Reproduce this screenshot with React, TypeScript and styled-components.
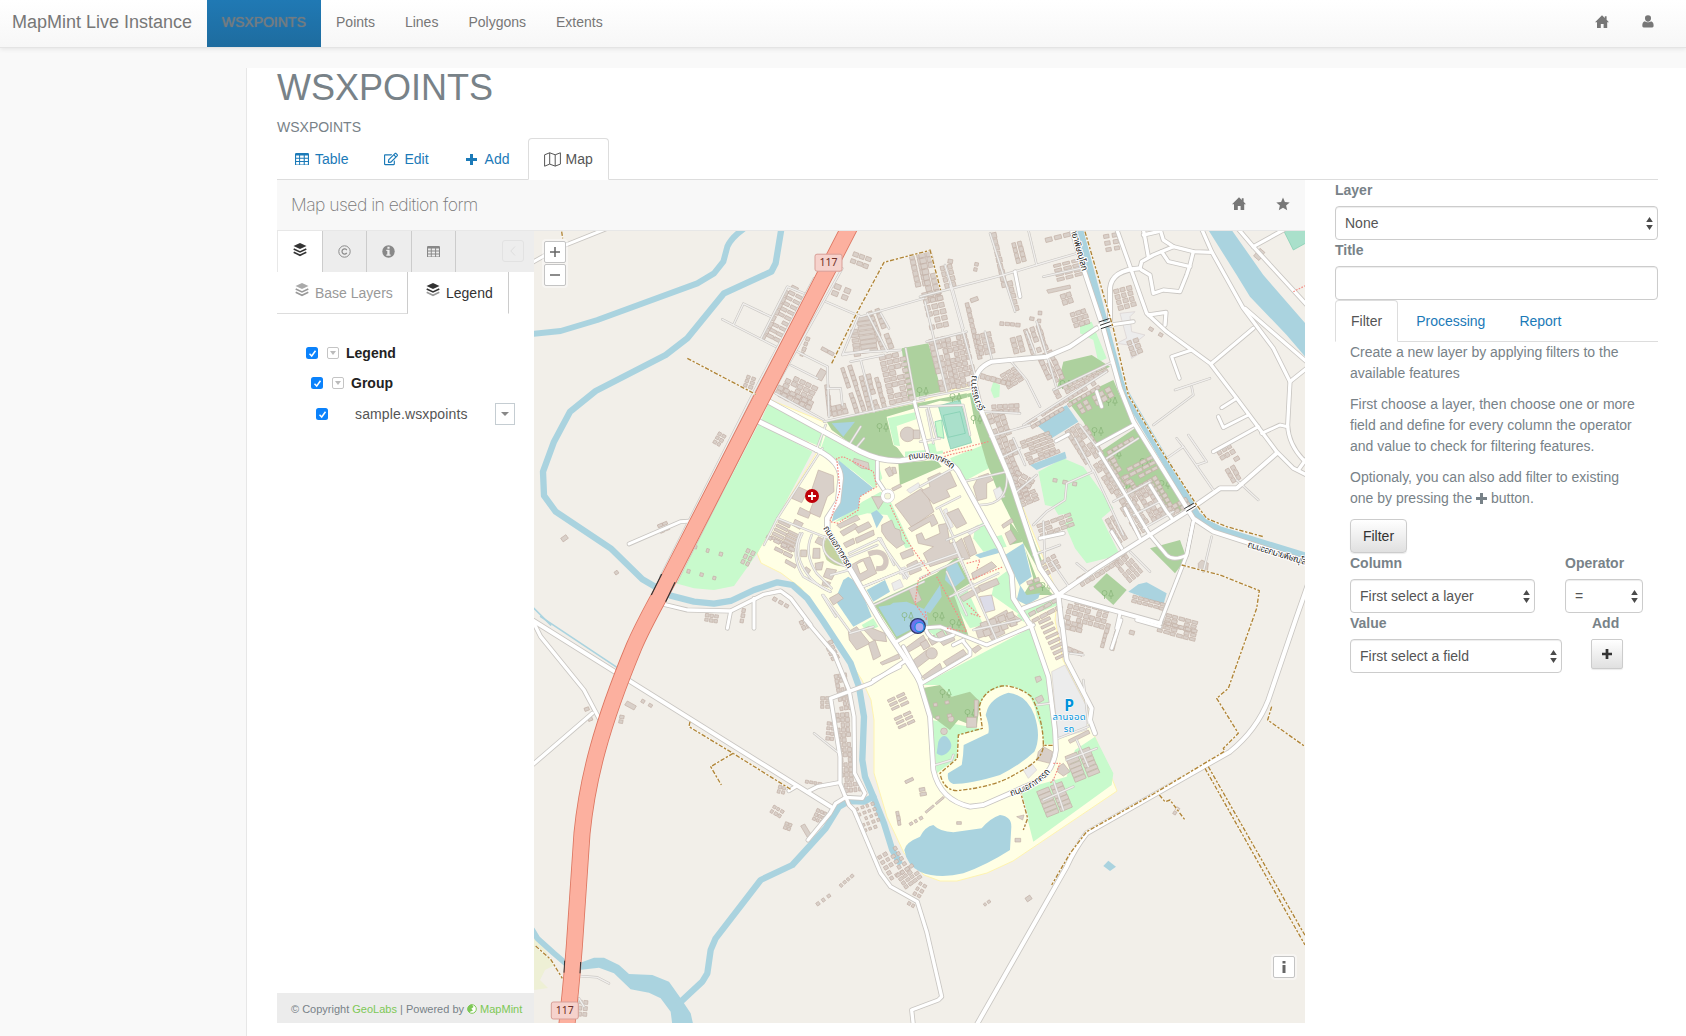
import React from 'react';
import styled, { createGlobalStyle, css } from 'styled-components';
import { FaRegEdit } from 'react-icons/fa';

const Global = createGlobalStyle`
  * { box-sizing: border-box; }
  body { margin: 0; background: #f9f9f9; font: 14px/21px "Liberation Sans", Arial, sans-serif; color: #788288; overflow: hidden; }
  svg { flex: none; }
`;

/* ---------- icons ---------- */
const HomeIcon = ({ s = 14 }: { s?: number }) => (
  <svg width={s} height={s} viewBox="0 0 14 14" fill="currentColor"><path d="M7 .3 9.800 3V1.300h1.800v3.500L14 7.300h-1.800V13H8.600V9H5.800v4H2V7.300H0z" /></svg>
);
const UserIcon = () => (
  <svg width="12" height="13" viewBox="0 0 12 13" fill="currentColor"><path d="M6 .2a3 3 0 0 1 3 3.200c0 1.900-1.300 3.300-3 3.300S3 5.300 3 3.400A3 3 0 0 1 6 .2zM3 6.200c1 1.200 4.800 1.300 6 0 2 .6 2.600 2.200 2.600 4.200 0 1.300-.4 2-1.400 2H1.700c-1 0-1.400-.7-1.400-2C.3 8.300 1 6.800 3 6.200z" /></svg>
);
const StarIcon = () => (
  <svg width="14" height="14" viewBox="0 0 14 14" fill="currentColor"><path d="M7 .5 8.900 5l4.800.4-3.600 3.200 1.100 4.700L7 10.800l-4.200 2.500 1.100-4.700L.3 5.400 5.100 5z" /></svg>
);
const TableIcon = ({ s = 14 }: { s?: number }) => (
  <svg width={s} height={s * 0.9} viewBox="0 0 14 12.600"><path fill="currentColor" fillRule="evenodd" d="M1.200 0h11.600Q14 0 14 1.200v10.200q0 1.200-1.200 1.200H1.200Q0 12.600 0 11.400V1.200Q0 0 1.200 0zM1.100 2.600v2.200h3V2.600zm4 0v2.200h3.600V2.600zm4.700 0v2.200h3.100V2.600zM1.100 5.800V8h3V5.800zm4 0V8h3.600V5.800zm4.700 0V8h3.100V5.800zM1.100 9.100v2.300h3V9.100zm4 0v2.300h3.600V9.100zm4.700 0v2.300h3.100V9.100z" /></svg>
);
const PlusIcon = ({ s = 11 }: { s?: number }) => (
  <svg width={s} height={s} viewBox="0 0 11 11" fill="currentColor"><path d="M4 0h3v4h4v3H7v4H4V7H0V4h4z" /></svg>
);
const MapIcon = () => (
  <svg width="17" height="15" viewBox="0 0 17 15" fill="none" stroke="currentColor" strokeWidth="1"><path d="M.6 2.800 5.700.8v11.300L.6 14.200zM5.700.8l5.500 2v11.300l-5.500-2M11.200 2.800l5.200-2v11.300l-5.200 2" /></svg>
);
const LayersIcon = ({ tone = 0 }: { tone?: number }) => (
  <svg width="14" height="14" viewBox="0 0 14 14">
    <path fill={tone === 1 ? '#aaa' : '#333'} d="M7 0l6.500 3L7 6 .5 3z" />
    <path fill="none" stroke={tone === 1 ? '#999' : '#333'} strokeWidth="1.500" d="M.7 6 7 9l6.300-3" />
    <path fill="none" stroke={tone === 0 ? '#333' : '#999'} strokeWidth="1.500" d="M.7 9.300l6.300 3 6.300-3" />
  </svg>
);
const InfoIcon = () => (
  <svg width="13" height="13" viewBox="0 0 13 13"><circle cx="6.500" cy="6.500" r="6.200" fill="#888" /><path fill="#eee" d="M5.400 1.800h2.200v1.900H5.400zM4.300 4.800h3.300v4.600h1v1.300H4.300V9.400h1V6.100h-1z" /></svg>
);
const CopyrightIcon = () => (
  <svg width="13" height="13" viewBox="0 0 13 13" fill="none" stroke="#8a8a8a"><circle cx="6.500" cy="6.500" r="5.700" /><path d="M8.800 5.100a2.600 2.600 0 1 0 0 2.800" strokeWidth="1.200" /></svg>
);
const MintIcon = () => (
  <svg width="10" height="10" viewBox="0 0 10 10"><circle cx="5" cy="5" r="4.300" fill="#fff" stroke="#7dc855" /><path fill="#7dc855" d="M5 .5a4.500 4.500 0 0 0-3 7.800L6 6.500 4.300 4.700 6.500 3z" /></svg>
);
const Updown = () => (
  <svg width="7" height="13" viewBox="0 0 7 13" fill="#4b4b4b"><path d="M3.500 0 6.800 5H.2zM3.500 13 6.800 8H.2z" /></svg>
);

/* ---------- top bar ---------- */
const Nav = styled.nav`
  display: flex; height: 48px; background: linear-gradient(#fff, #f7f7f7); border-bottom: 1px solid #e4e4e4;
  box-shadow: 0 1px 5px rgba(0,0,0,.09); color: #777;
`;
const Brand = styled.div`width: 207px; padding: 12px 0 0 12px; font-size: 18px; line-height: 20px; white-space: nowrap;`;
const NavItem = styled.a<{ $active?: boolean }>`
  padding: 12px 15px; line-height: 20px; text-shadow: 0 1px 0 rgba(255,255,255,.25);
  ${p => p.$active && css`background: linear-gradient(#2079b4, #1e6c9f); color: #737b81; text-shadow: 0 0 1px #808080;`}
`;
const NavRight = styled.div`margin-left: auto; display: flex; gap: 33px; padding: 15px 32px 0 0;`;

const Page = styled.main`margin: 20px 0 0 246px; border-left: 1px solid #e7e7e7; background: #fff; height: 968px; padding: 0 28px 0 30px;`;
const Title = styled.h1`margin: 0; font-size: 36px; line-height: 39px; font-weight: 400; color: #788288;`;
const Subtitle = styled.div`margin-top: 10px; height: 21px; line-height: 21px;`;

const Tabs = styled.div`display: flex; height: 42px; border-bottom: 1px solid #ddd;`;
const Tab = styled.a<{ $active?: boolean }>`
  display: flex; align-items: center; gap: 4px; height: 42px; padding: 0 15px; margin-right: 2px;
  color: #1b7ab8; border: 1px solid transparent; border-radius: 4px 4px 0 0;
  ${p => p.$active && css`color: #555; background: #fff; border-color: #ddd #ddd transparent;`}
`;
const TabIcon = styled.span`width: 18px; display: flex; justify-content: center;`;
const Columns = styled.div`display: flex; align-items: flex-start;`;
const MapPanel = styled.section`width: 1028px;`;
const PanelHead = styled.header`
  height: 51px; display: flex; align-items: center; padding: 0 15px 0 14px; background: #f8f8f8; border-bottom: 1px solid #e7e7e7; color: #777;
`;
const PanelTitle = styled.span`font: 200 17.500px "Inter", "Roboto", sans-serif; letter-spacing: -.52px; color: #777; margin: 0 auto 2px 0;`;
const HeadIcons = styled.span`display: flex; gap: 30px; padding-bottom: 2px;`;
const PanelBody = styled.div`display: flex; height: 792px;`;

/* ---------- layer sidebar ---------- */
const Side = styled.aside`width: 257px; display: flex; flex-direction: column;`;
const ToolRow = styled.div`display: flex; height: 41px; background: #ededed; padding-right: 10px; align-items: stretch;`;
const Tool = styled.div<{ $active?: boolean }>`
  width: 44.300px; display: flex; align-items: center; justify-content: center; color: #888; border-right: 1px solid #ccc;
  ${p => p.$active && css`width: 46px; background: #fff; padding-bottom: 4px; border-left: 1px solid #e8e8e8;`}
`;
const Collapse = styled.div`margin: 9px 0 0 auto; width: 22px; height: 22px; border: 1px solid #e2e2e2; border-radius: 3px; display: grid; place-items: center;`;
const SubTabs = styled.div`display: flex; height: 42px;`;
const SubTab = styled.div<{ $w: number; $active?: boolean }>`
  width: ${p => p.$w}px; display: flex; gap: 6px; padding: 11px 0 0 18px; line-height: 21px; border-right: 1px solid #ccc;
  color: ${p => (p.$active ? '#333' : '#999')}; border-bottom: 1px solid ${p => (p.$active ? 'transparent' : '#ddd')};
`;
const Tree = styled.div`flex: 1; padding-top: 24px;`;
const TreeRow = styled.div<{ $x: number; $h: number; $leaf?: boolean }>`
  display: flex; align-items: center; height: ${p => p.$h}px; padding-left: ${p => p.$x}px; color: ${p => (p.$leaf ? '#555' : '#222')};
  font-weight: ${p => (p.$leaf ? 400 : 700)};
`;
const Check = styled.span`width: 12px; height: 12px; border-radius: 2.500px; background: #0b82fb; display: grid; place-items: center;`;
const Fold = styled.span`width: 12px; height: 12px; border: 1px solid #c4c4c4; border-radius: 2px; margin: 0 7px 0 9px; display: grid; place-items: center;`;
const LeafName = styled.span`margin-left: 27px; width: 140px; letter-spacing: .13px;`;
const Drop = styled.span`width: 20px; height: 22px; border: 1px solid #c5cdd2; display: grid; place-items: center;`;
const Foot = styled.footer`height: 30px; padding: 2px 0 0 14px; background: #ececec; font-size: 11px; display: flex; align-items: center; white-space: pre;`;
const Green = styled.a`color: #7dc855;`;
const MintLink = styled(Green)`display: flex; align-items: center; gap: 3px;`;

/* ---------- form column ---------- */
const Form = styled.section`margin-left: 30px; width: 323px;`;
const Label = styled.label`display: block; height: 26px; line-height: 21px; font-weight: 700;`;
const SelectBox = styled.div<{ $w: number }>`
  width: ${p => p.$w}px; height: 34px; display: flex; align-items: center; justify-content: space-between; padding: 0 4px 0 9px;
  border: 1px solid #ccc; border-radius: 4px; background: #fff; box-shadow: inset 0 1px 1px rgba(0,0,0,.075); color: #555;
`;
const Input = styled.input`width: 323px; height: 34px; border: 1px solid #ccc; border-radius: 4px; display: block; box-shadow: inset 0 1px 1px rgba(0,0,0,.075);`;
const Pane = styled.div`padding: 0 15px;`;
const Button = styled.button<{ $w: number; $h: number }>`
  display: grid; place-items: center; width: ${p => p.$w}px; height: ${p => p.$h}px; padding: 0; font: inherit; color: #333; border: 1px solid #ccc; border-radius: ${p => (p.$h > 32 ? 4 : 2)}px;
  background: linear-gradient(#fff, #e0e0e0); box-shadow: 0 1px 1px rgba(0,0,0,.08);
`;
const FieldRow = styled.div<{ $gap: number }>`display: flex; gap: ${p => p.$gap}px;`;
const AddField = styled.div`& > label { margin-left: 1px; }`;
const Help = styled.p`margin: 0 0 10px; white-space: nowrap; line-height: 21px; & svg { display: inline-block; vertical-align: -1px; }`;

/* ---------- map ---------- */
const MapView = styled.div`position: relative; width: 771px; height: 792px; overflow: hidden; background: #f2efe9;`;
const Ctl = styled.div<{ $c: 'zoom' | 'info' }>`
  position: absolute; padding: 2px; border-radius: 4px; background: rgba(255,255,255,.4); display: grid; gap: 1px;
  ${p => (p.$c === 'zoom' ? css`left: 8px; top: 8px;` : css`right: 8px; bottom: 43px;`)}
`;
const CtlBtn = styled.div`width: 22px; height: 22px; border: 1px solid #c4c4c4; border-radius: 2px; background: #fff; color: #666; font-weight: 700; display: grid; place-items: center;`;

/* Survey sheets: every sheet has its own origin and three units per pixel. */
type Sheet = 'A' | 'B' | 'C' | 'D' | 'E';
const origin: Record<Sheet, [number, number]> = { A: [534, 225], B: [920, 225], C: [534, 620], D: [920, 620], E: [740, 380] };
const T = (s: Sheet) => `translate(${origin[s][0]},${origin[s][1]}) scale(.33333)`;
type Shape = [Sheet, string];

const campus = 'M771,400 824,422 920,402 973,382 1010,475 1058,595 1055,620 1063,660 1087,707 1095,737 1117,791 1013,861 987,873 957,881 940,881 924,875 904,853 887,817 874,773 874,720 871,700 862,680 851,663 824,622 801,588 781,573 761,563 757,553 777,518 817,452Z';

const grass: Shape[] = [
  ['A', '675,595 835,680 740,860 670,985 600,1083 540,1095 480,1090 425,1075'],
  ['A', '705,530 870,625 860,665 680,590'], ['A', '875,630 960,680 1030,705 1045,760 1020,790 960,740 860,672'],
  ['A', '985,830 1040,800 1070,830 1133,965 1115,970 1060,870 1000,865 900,892 960,850'],
  ['E', '495,205 600,185 610,220 495,240'], ['E', '585,125 605,120 612,175 592,170'],
  ['B', '90,700 190,660 215,725 130,770'],
  ['B', '355,740 430,700 490,725 580,850 545,880 600,990 500,1015 465,970 435,900 450,865 415,870 400,845 375,840'],
  ['B', '480,300 515,290 560,400 535,412 520,345 480,325'], ['B', '220,470 240,480 238,515 222,520 212,495'],
  ['B', '165,905 195,890 240,970 190,980 160,940'], ['B', '225,935 245,930 260,965 240,970'],
  ['B', '225,1065 265,1035 280,1130 300,1170 215,1110'], ['B', '290,1170 410,1110 415,1140 350,1165 310,1190'],
  ['B', '90,1110 140,1090 190,1200 150,1210'],
  ['D', '5,195 330,25 385,170 405,370 375,375 350,290 320,220 265,195 215,215 180,260 150,225 95,230 60,195'],
  ['D', '15,25 30,0 100,40 60,60'],
  ['D', '35,300 90,310 190,328 115,345 110,415 50,460'], ['D', '465,390 525,350 580,460 575,495 340,665 300,510 440,470'],
  ['E', '365,735 400,715 415,740 380,755'],
];
const wood: Shape[] = [
  ['B', '-55,370 25,355 65,500 -35,522'], ['E', '260,125 680,40 685,70 600,62 525,85 440,110 470,200 495,235 400,235 330,190 275,150'],
  ['E', '475,250 590,240 605,260 480,315'], ['E', '680,42 705,35 905,540 890,560 850,490 780,350 740,250'],
  ['E', '400,670 590,580 650,530 690,610 640,640 685,765 560,740 470,778'],
  ['B', '430,410 515,390 570,425 410,495'], ['B', '445,530 580,465 595,500 640,600 530,665 490,590'],
  ['B', '540,680 645,610 800,840 780,860 740,850 680,780 630,810 580,730'], ['B', '690,970 780,945 800,1000 765,1045'],
  ['B', '520,1085 560,1045 620,1095 580,1140'], ['B', '270,890 300,930 350,1060 400,1110 310,1110 340,1060 310,950 270,960'],
  ['D', '5,205 60,195 95,230 150,215 180,245 170,322 115,300 90,330 50,300 35,290'],
];
const ponds: Shape[] = [
  ['B', '345,595 440,540 475,590 395,640'], ['B', '330,720 435,680 440,700 350,735'], ['B', '625,1100 655,1078 680,1072 740,1105 730,1140'],
  ['B', '255,990 310,955 335,1055 300,1080 320,1110 360,1105 355,1120 320,1140 290,1125 300,1085'],
  ['E', '295,240 400,325 360,350 355,385 275,425 305,310'], ['E', '393,400 410,390 430,410 410,445'], ['E', '275,130 345,125 310,170'],
  ['E', '285,660 310,600 325,590 355,610 395,710 340,740'], ['E', '380,630 435,600 450,635 400,665'],
  ['E', '415,680 450,675 460,668 500,665 560,690 565,735 510,750 470,770'], ['E', '620,560 650,545 675,595 640,625 615,600'],
  ['E', '705,525 765,505 790,515 720,535'], ['E', '600,615 605,650 570,700 550,690'],
  ['D', '550,738 565,722 588,740 570,753'], ['B', '865,15 935,15 1030,150 1160,300 1160,400 1100,330 990,215 950,150'],
  ['C', '135,1030 180,1013 210,1013 255,1035 285,1062 355,1065 405,1085 440,1135 470,1180 478,1215 415,1215 410,1175 380,1135 345,1118 290,1108 240,1060 195,1043 135,1050'],
];
const lakes = [
  'M200,275 Q210,235 265,218 Q320,225 343,285 Q365,350 343,395 Q300,435 240,465 Q150,492 100,492 Q80,485 84,460 L125,435 Q130,410 131,375 L205,340 Q210,320 197,285Z',
  'M0,650 Q15,620 40,615 Q60,635 100,637 L185,625 Q210,595 240,585 Q275,590 274,620 L270,690 Q200,735 130,760 Q55,778 0,755 Q-40,735 -47,690 Q-45,668 0,650Z',
  'M55,365 Q65,343 80,350 Q105,375 85,395 Q65,415 50,400Z',
];
const streams: [Sheet, string, number][] = [
  ['A', 'M628,12 Q590,40 580,65 L568,110 L540,145 L490,175 L190,285 L80,318 L-10,327', 18],
  ['A', 'M742,12 L725,115 L712,140 L570,205 L460,340 L395,390 L185,498 L108,560 L60,650 L27,740 L30,812 L65,860 L230,970 L325,1063 L410,1112 L480,1130 L540,1136 L590,1128 L660,1095 L730,1072 L775,1080 L820,1120 L865,1185 L950,1315 L975,1385 L990,1475 L985,1605 L993,1655 L1018,1715 L1050,1795 L1075,1875 L1095,1910', 19],
  ['C', 'M1018,530 L990,545 L945,543 L915,560 L875,625 L775,735 L680,780 L545,955 L530,990 L520,1060 L505,1085 L435,1150', 19],
  ['C', 'M-5,930 L10,955 L60,1000 L95,1030', 17], ['C', 'M20,-10 L250,143', 5], ['A', 'M-5,1145 L50,1200', 5],
  ['B', 'M478,12 L600,470 L625,520 L790,800 L830,870 L860,895 L900,915 L1160,995', 22],
];
const R = (w: number, s: Sheet, list: string[]): [Sheet, string, number][] => list.map(d => [s, d, w]);
const roads: [Sheet, string, number][] = [
  ...R(4, 'A', [
    'M565,283 L680,342 L725,365', 'M598,300 L628,236 L710,275', 'M680,342 L760,185 L810,205', 'M725,505 L870,585', 'M770,420 L850,460',
    'M875,230 L980,275 L1170,220', 'M930,385 L1100,375', 'M975,270 L925,390 L1005,375', 'M1000,265 L1060,380', 'M1040,265 L1065,310',
    'M880,425 L885,575', 'M950,410 L1050,390', 'M980,405 L1020,560', 'M1115,370 L1145,530', 'M790,380 L880,425', 'M870,590 L1170,525', 'M880,490 L920,490 L925,540',
    'M865,670 L730,880 L690,960', 'M875,600 L845,680', 'M730,880 L870,935 L890,940', 'M805,925 Q770,990 830,1060 Q860,1090 890,1100', 'M945,1035 L890,1050',
    'M865,1110 L905,1175', 'M945,985 L1040,940 L1080,1020', 'M990,1085 L1170,1010', 'M1020,1140 L1170,1070', 'M935,1000 L1030,960', 'M945,660 L980,605', 'M965,670 L990,640',
  ]),
  ...R(4, 'B', [
    'M0,215 L250,150 L350,120 L470,85', 'M210,25 L285,260', 'M325,15 L350,120', 'M370,155 L480,130', 'M15,230 L80,500', 'M90,180 L165,450', 'M75,120 L100,200 L130,310', 'M20,350 L140,320',
    'M0,520 L160,490', 'M190,560 L300,565', 'M265,400 L320,465 L360,545', 'M350,290 L410,490', 'M320,320 L345,385', 'M195,320 L215,400', 'M400,495 L580,410', 'M310,600 L560,440',
    'M280,640 L315,720', 'M210,635 L330,600', 'M240,700 L300,670', 'M560,700 L655,640', 'M465,640 L520,740 L440,775 L435,825 L380,860 L340,900', 'M480,600 L540,680', 'M290,800 L350,750', 'M520,735 L610,930',
    'M580,830 L690,770', 'M640,870 L720,830', 'M670,910 L760,860', 'M700,600 L820,510 L815,485', 'M765,495 L870,460', 'M740,700 L790,665 L770,640', 'M805,630 L860,710 L830,720', 'M790,665 L880,795', 'M950,765 L1015,825',
    'M875,935 L850,1040', 'M370,890 L375,1010', 'M340,990 L420,960', 'M470,1015 L500,1040', 'M630,980 L690,1040', 'M395,1010 L450,1090', 'M130,770 L260,740 Q270,840 180,840', 'M90,1115 L235,1045', 'M80,1040 L140,1170', 'M0,1060 L130,1000', 'M0,545 L130,540 L150,630', 'M0,650 L60,640 M25,548 L50,640',
  ]),
  ...R(4, 'D', ['M160,30 L300,0', 'M415,355 L505,320', 'M470,360 L505,440', 'M400,480 L430,570', 'M370,540 L460,500', 'M440,420 L530,385', 'M450,100 L490,105', 'M350,255 L390,250', 'M45,435 L95,420 L100,405', 'M490,180 L505,310']),
  ...R(4, 'C', ['M135,1068 L190,1072 L225,1090', 'M840,340 L915,400', 'M135,1135 L150,1160']),
  ...R(4, 'E', ['M600,385 L640,470', 'M590,385 L660,350', 'M620,480 L740,430', 'M415,475 L500,595', 'M480,580 L650,520', 'M370,620 L470,580', 'M640,490 L770,780', 'M560,90 L580,190', 'M400,740 L330,760', 'M250,645 L330,755', 'M640,480 L700,630', 'M540,320 L640,265', 'M180,460 Q150,530 190,590 L270,635', 'M215,465 Q190,520 230,580 L275,625', 'M255,470 Q230,530 320,560']),
  ...R(9, 'A', ['M-10,115 L70,70 L215,12', 'M285,957 L440,890 L470,888', 'M590,1158 L580,1210', 'M660,1120 L660,1210']),
  ...R(10, 'A', ['M390,1138 L460,1155 L590,1158 L690,1108 L740,1098 L770,1120 L830,1200']),
  ...R(4, 'A', ['M840,160 L660,500 L380,1055', 'M925,130 L700,530 L428,1070']),
  ...R(10, 'C', ['M815,0 L900,100 L945,210 L960,290 L962,460 L993,520 L985,535 L935,532 L918,490 L918,410 L890,235 L1010,190 L1110,125', 'M0,10 L20,50 L150,210 L195,295', 'M-5,435 L175,280', 'M820,515 L850,500 L915,488', 'M935,532 L905,550 L888,580 L822,660', 'M935,530 L945,555 L960,570 L1040,760 L1070,800 L1150,845 L1178,935 L1223,1130 L1213,1140 L1133,1170 L1138,1215', 'M765,512 L785,500']),
  ...R(12, 'C', ['M-5,0 L290,185 L890,560']),
  ...R(12, 'D', ['M168,1218 L440,740 Q465,685 500,640 L930,395 Q1010,330 1045,240 L1130,-10 L1165,-110']),
  ...R(12, 'D', ['M-25,135 L0,190 L30,290 L40,450 Q60,540 150,560 L190,555 L350,485 Q400,455 408,390 L405,330 L385,170 L330,10', 'M425,0 L440,120 L515,265 L510,300 L525,340']),
  ...R(9, 'D', ['M603,0 L575,85', 'M650,0 L720,20', 'M5,190 L150,105 L150,90 L130,65', 'M15,20 Q25,60 60,60 L100,45', 'M100,75 L130,60']),
  ...R(13, 'B', ['M330,1200 L280,1120 L275,1050 L240,970 L120,750 Q100,700 0,690', 'M415,1110 L425,1200', 'M415,1110 L360,1030 L270,760 L185,560']),
  ...R(14, 'A', ['M1170,697 L1100,707 Q1040,710 980,680 L705,530', 'M675,590 L850,675 Q920,710 920,760 L912,830 L880,880 L880,915 L1040,1190 L1160,1370']),
  ...R(9, 'E', ['M432,330 L412,300 L412,245', 'M523,65 L565,225', 'M470,785 L540,745 L600,740 L690,775 L740,795 L880,735', 'M400,900 L480,860', 'M490,800 L540,890']),
  ...R(12, 'B', ['M530,310 L450,365 L380,395 L215,410 Q165,430 165,480 L185,560', 'M415,1110 L530,1030 L800,860 L900,790 L950,790 L1070,685', 'M415,1110 L720,1195', 'M415,1110 L310,1150', 'M455,12 L490,130 L550,310 L600,490 L640,590 L820,880 L880,920 L1160,1010', 'M570,300 L570,190 Q575,135 660,130 ']),
  ...R(10, 'B', ['M660,130 L665,110 L700,90 L760,65 L820,80 L875,82', 'M590,12 L680,265 L740,320 L870,415 L950,520 L1070,680 L1120,730 L1160,750', 'M845,12 L875,80 L970,250 L1060,370 L1110,470 L1103,600 Q1105,660 1155,710', 'M1135,735 L1160,700', 'M955,12 L1000,65 L1165,245', 'M1000,65 L1090,15', 'M975,250 L1160,410', 'M1110,470 L1160,430', 'M1000,310 L875,415', 'M665,135 L690,150 L700,205 L730,195 L780,200 L800,150 L810,120 L820,80', 'M725,80 L745,110 L810,125', 'M720,12 L730,45 L760,65', 'M670,12 L685,95', 'M670,30 L715,20', 'M685,270 L738,262 L735,300']),
  ...R(9, 'B', ['M570,300 L640,290', 'M815,375 L755,395 L778,460', 'M1015,605 L880,680', 'M985,570 L910,608 L895,575', 'M950,520 L905,548', 'M1025,625 L1080,600 L1103,605', 'M820,890 L800,990 Q760,1010 740,990 L690,930 L540,685', 'M820,890 L800,990 L720,1195', 'M640,600 L530,660', 'M660,940 L615,850', 'M690,780 L740,860 L760,885', 'M605,970 L575,920', 'M285,140 L300,215', 'M360,940 L430,925', 'M600,1165 L590,1210', 'M530,500 L545,545', 'M408,648 L445,628']),
];
const trunk = 'M950,-1185 L690,-680 L405,-125 C360,-40 330,10 300,80 C200,320 160,480 144,640 L125,920 Q117,1050 98,1220';
const tracks: Shape[] = [
  ['A', '83,20 86,40'], ['A', '460,400 665,508'], ['A', '893,415 960,280 1050,112 1180,78 1190,75'], ['B', '30,75 62,195'], ['B', '495,20 580,310 625,510 720,670 830,840 860,880 920,905 1030,935'],
  ['B', '785,1020 900,1050 1018,1097 1010,1150 925,1390 890,1420 955,1525 910,1570 915,1580'],
  ['C', '468,305 465,320 597,400 770,508'], ['C', '597,400 530,440 562,495'], ['C', '5,978 50,1018 85,1075'],
  ['D', '912,395 700,522 500,635 450,700 395,795'], ['D', '855,445 1155,975'], ['D', '865,440 1160,955'], ['D', '1055,260 1043,300 1160,383'],
  ['D', '718,525 735,545 750,540 795,600'], ['D', '300,510 323,595 310,630'],
];
const lakePath = 'M398,376 L370,376 Q370,300 335,230 Q290,195 245,198 Q190,210 178,260 L187,325 L115,345 L112,415 L60,460 Q70,510 110,512 Q230,500 290,460 Q370,420 370,376';
const footways: Shape[] = [
  ['E', '295,430 270,425 300,330 290,235 310,230 400,275 410,320 360,350 355,390 300,425'], ['E', '450,375 500,480 570,580 535,600 525,670 560,720 555,690'],
  ['E', '610,220 625,215 745,185'], ['E', '613,230 630,224 700,208'], ['E', '590,590 680,755 620,745'], ['E', '690,600 790,560'], ['E', '680,670 720,710 690,700'], ['E', '680,550 720,540 710,570'], ['D', '400,430 420,430 400,480 390,490'], ['B', '1120,200 1160,180'],
];
const solids: Shape[] = [
  ['E', '235,270 280,287 282,335 262,350 240,412 208,398 222,360 208,350'], ['E', '175,320 203,333 185,368 155,355'], ['E', '180,382 212,398 205,415 172,402'], ['E', '165,418 190,430 180,448 158,436'],
  ['E', '465,375 545,325 560,340 582,395 515,442'], ['E', '563,295 600,278 607,285 630,275 650,318 620,330 630,350 580,372 545,332 570,320'],
  ['E', '715,290 745,280 750,290 760,300 740,310 740,355 712,362 700,320'], ['E', '620,400 655,385 680,430 650,445'], ['E', '505,445 580,402 594,430 575,440 570,425 515,455'],
  ['E', '425,435 455,420 465,445 480,450 485,480 495,490 470,505 440,478 425,455'], ['E', '528,465 545,458 555,480 600,460 595,435 620,430 630,490 645,485 660,530 570,560 550,520 580,500 535,490'],
  ['E', '360,540 390,530 410,580 355,608 325,560'], ['E', '325,755 350,740 390,790 350,810 328,780'], ['E', '370,748 385,740 435,760 440,785 400,780'], ['E', '385,790 405,780 422,828 400,840'], ['E', '420,848 475,822 480,835 427,855'],
  ['E', '495,805 550,765 560,785 500,820'], ['E', '520,840 560,810 575,830 530,865'], ['E', '545,890 600,850 608,870 555,897'], ['E', '610,845 670,808 680,822 620,858'],
  ['E', '600,785 640,768 645,780 610,797'], ['E', '695,808 715,795 725,805 705,820'], ['E', '268,655 295,640 310,655 280,675'],
  ['E', '660,650 715,620 722,635 670,665'], ['E', '715,618 770,595 778,612 725,635'], ['E', '695,580 755,545 770,560 700,600'],
  ['E', '705,745 735,730 745,765 715,775'], ['E', '745,720 800,690 810,712 760,735'], ['E', '735,750 780,720 795,760 755,780'], ['E', '790,715 815,700 845,720 810,740'],
  ['E', '645,490 665,475 690,535 670,540'], ['E', '670,475 690,465 710,520 690,530'], ['E', '795,460 812,450 830,480 810,495'], ['E', '785,435 815,415 820,425 790,445'],
  ['E', '290,435 350,405 360,418 300,445'], ['E', '300,455 345,430 355,442 310,468'], ['E', '345,445 385,425 395,440 355,460'], ['E', '310,490 340,475 345,490 318,503'], ['E', '345,475 400,450 403,465 350,490'], ['E', '395,350 425,350 430,365 415,388'],
  ['E', '240,505 220,505 218,535 240,535'], ['E', '200,510 182,510 182,530 200,530'], ['E', '225,550 250,545 245,570 228,570'], ['E', '260,565 290,570 275,600 250,590'], ['E', '138,538 170,555 165,565 135,548'], ['E', '480,520 515,505 522,525 488,538'], ['E', '500,555 530,540 545,570 510,585'],
  ['E', '235,470 255,480 245,497 225,487'], ['E', '250,600 272,608 265,622 246,615'], ['E', '198,560 212,570 205,582 192,572'], ['E', '342,235 385,248 388,268 365,265 340,248'], ['E', '435,268 450,260 460,285 447,290'], ['E', '455,262 466,262 470,280 460,282'], ['E', '455,325 480,312 485,320 460,333'], ['E', '505,625 525,615 545,660 525,672'],
  ['D', '355,395 370,380 398,395 390,430 350,420'], ['D', '415,440 430,430 450,455 430,468 412,455'], ['D', '140,292 170,292 170,322 140,322'], ['D', '163,240 175,240 173,290 163,290'], ['D', '345,235 365,225 372,240 355,250'], ['D', '345,172 360,168 365,180 350,188'],
  ['D', '290,590 312,585 308,600'], ['D', '445,360 505,330 510,340 450,370'], ['C', '272,255 280,243 307,258 300,270'], ['C', '800,618 812,612 832,645 820,652'],
  ['B', '835,1015 845,1005 865,1015 862,1040 835,1035'], ['B', '380,195 450,180 452,190 385,205'],
];
const pale: Shape[] = [
  ['E', '500,330 535,308 542,320 510,340'], ['E', '610,390 620,385 640,440 632,445'], ['E', '760,330 780,320 795,350 770,360'], ['E', '680,455 715,435 720,445 690,465'], ['E', '455,610 480,598 490,620 462,632'], ['E', '480,565 495,560 508,590 490,598'],
  ['E', '695,580 735,560 740,575 700,592'], ['E', '655,635 700,608 703,618 660,645'], ['D', '395,155 435,135 500,260 500,330 415,355 405,260'], ['D', '310,450 335,430 350,450 325,475'],
  ['B', '600,265 645,260 630,275 635,320 675,330 650,350 660,385 635,400 625,360 590,355 620,340'],
];

/* Rows of small houses: sheet, x, y, angle, columns, rows, width, height, column step, row step. */
type Block = [Sheet, number, number, number, number, number, number, number, number, number];
const blocks: Block[] = [
  ['A', 775, 180, 27, 2, 10, 20, 9, 24, 18], ['A', 755, 195, 27, 1, 8, 12, 16, 14, 21], ['A', 765, 445, 26, 5, 5, 16, 12, 20, 16], ['A', 735, 480, 26, 6, 2, 16, 12, 20, 15], ['A', 968, 278, -8, 1, 8, 48, 11, 50, 14], ['A', 950, 315, -8, 1, 6, 20, 10, 22, 14],
  ['A', 1000, 262, -20, 2, 8, 14, 14, 24, 16], ['A', 1035, 395, -13, 4, 9, 17, 12, 20, 17], ['A', 920, 430, -18, 2, 9, 11, 15, 22, 16], ['A', 975, 455, -15, 3, 7, 12, 14, 22, 16], ['A', 872, 480, -6, 1, 6, 12, 14, 22, 16], ['A', 890, 545, -13, 3, 2, 14, 14, 16, 17],
  ['A', 1125, 90, -12, 2, 6, 15, 14, 22, 17], ['A', 960, 80, 20, 3, 2, 16, 12, 20, 22], ['A', 905, 175, 22, 2, 2, 18, 14, 32, 22], ['A', 640, 450, 20, 2, 3, 11, 9, 16, 13], ['A', 555, 620, 30, 2, 3, 10, 9, 14, 14],
  ['A', 865, 365, 28, 2, 1, 20, 10, 22, 12], ['A', 818, 335, 20, 1, 4, 10, 11, 12, 16], ['A', 860, 430, 30, 1, 1, 22, 32, 22, 12],
  ['A', 640, 970, 25, 2, 3, 10, 12, 16, 18], ['A', 480, 960, 15, 3, 2, 9, 10, 40, 75], ['A', 370, 900, -22, 2, 2, 14, 8, 16, 18], ['A', 80, 940, -35, 1, 1, 20, 12, 1, 1], ['A', 240, 1042, -35, 1, 1, 11, 9, 1, 1],
  ['A', 515, 1165, 8, 3, 2, 10, 9, 14, 14], ['A', 625, 1150, 10, 1, 3, 11, 11, 14, 16], ['A', 720, 1115, 30, 3, 1, 12, 10, 20, 14],
  ['A', 735, 885, 26, 1, 5, 38, 8, 42, 13], ['A', 765, 915, 26, 1, 6, 36, 7, 42, 10], ['A', 700, 930, 26, 4, 1, 18, 10, 25, 13], ['A', 725, 965, 26, 2, 1, 26, 10, 30, 13],
  ['B', -5, 85, -12, 2, 9, 18, 15, 22, 17], ['B', 5, 205, -13, 3, 6, 16, 13, 21, 20], ['B', 60, 125, -14, 2, 4, 12, 13, 22, 18], ['B', 212, 25, -12, 1, 9, 16, 15, 20, 19], ['B', 262, 170, -14, 1, 5, 13, 14, 20, 19], ['B', 275, 55, -14, 2, 4, 12, 14, 17, 16],
  ['B', 375, 40, -14, 3, 1, 20, 12, 28, 15], ['B', 400, 120, -14, 3, 4, 22, 8, 28, 14], ['B', 420, 210, -18, 2, 2, 14, 14, 18, 18], ['B', 450, 265, -18, 3, 3, 14, 12, 17, 17], ['B', 550, 30, -10, 2, 3, 16, 11, 26, 20],
  ['B', 25, 345, -13, 3, 9, 14, 15, 18, 18], ['B', 75, 340, -13, 4, 10, 14, 12, 17, 16], ['B', 135, 235, -13, 1, 11, 12, 13, 17, 16], ['B', 165, 330, -13, 3, 4, 13, 13, 17, 17], ['B', 270, 340, -15, 2, 3, 14, 14, 20, 17], ['B', 310, 315, -18, 3, 5, 13, 14, 20, 16], ['B', 350, 395, -25, 3, 6, 13, 14, 18, 16],
  ['B', 240, 450, -30, 3, 4, 16, 9, 19, 13], ['B', 180, 460, -75, 1, 6, 14, 13, 19, 16], ['B', 215, 540, -3, 5, 2, 14, 11, 17, 15], ['B', 320, 590, -31, 15, 1, 14, 10, 16, 13], ['B', 332, 603, -31, 15, 1, 14, 10, 16, 13], ['B', 400, 500, -28, 11, 2, 14, 10, 16, 14],
  ['B', 200, 570, -20, 3, 9, 14, 14, 18, 16], ['B', 245, 690, -22, 2, 9, 14, 14, 18, 16], ['B', 280, 790, -22, 3, 5, 17, 9, 21, 13], ['B', 300, 650, -20, 5, 5, 17, 8, 19, 13], ['B', 325, 710, -22, 6, 1, 15, 9, 17, 13], ['B', 290, 735, 30, 3, 2, 18, 12, 22, 17],
  ['B', 435, 620, -32, 4, 7, 13, 14, 17, 17], ['B', 520, 720, -32, 4, 7, 14, 12, 17, 15], ['B', 580, 800, -32, 4, 4, 14, 13, 18, 16], ['B', 350, 900, -20, 5, 3, 18, 9, 22, 15], ['B', 555, 885, -30, 2, 5, 12, 14, 18, 17], ['B', 600, 850, -32, 3, 6, 13, 13, 19, 17],
  ['B', 600, 740, -27, 5, 3, 19, 10, 22, 17], ['B', 640, 790, -30, 5, 8, 13, 12, 16, 15], ['B', 560, 680, -30, 5, 1, 16, 10, 19, 14], ['B', 470, 540, -30, 2, 2, 14, 14, 20, 17], ['B', 515, 515, -30, 3, 2, 16, 14, 22, 17], ['B', 580, 195, -15, 3, 4, 14, 12, 20, 17],
  ['B', 620, 350, -20, 2, 3, 14, 12, 20, 17], ['B', 740, 850, -30, 4, 3, 14, 12, 18, 16], ['B', 470, 1060, -32, 10, 2, 13, 12, 17, 18], ['B', 610, 970, 50, 5, 4, 16, 9, 19, 14], ['B', 640, 1110, 15, 6, 2, 14, 8, 17, 13], ['B', 450, 1120, 15, 7, 4, 14, 12, 18, 17], ['B', 360, 1010, -28, 3, 3, 12, 11, 18, 17],
  ['B', 890, 680, -30, 3, 2, 13, 12, 17, 18], ['B', 915, 735, -30, 2, 3, 12, 13, 18, 16], ['B', 940, 700, -30, 1, 1, 16, 12, 18, 17], ['B', 690, 305, 30, 2, 1, 12, 10, 34, 18], ['B', 1020, 70, 40, 1, 2, 20, 12, 34, 18], ['B', 400, 760, 10, 3, 1, 12, 10, 30, 18],
  ['B', 740, 1165, 15, 5, 3, 16, 9, 20, 13], ['B', 320, 1070, -20, 2, 2, 16, 10, 22, 18], ['B', 325, 1165, -28, 4, 2, 22, 10, 26, 22],
  ['B', 165, 112, 10, 1, 2, 11, 9, 20, 16], ['B', 85, 102, 10, 1, 1, 13, 11, 20, 16], ['B', 150, 222, -20, 1, 1, 24, 11, 20, 16], ['B', 240, 290, 5, 4, 1, 12, 10, 16, 16], ['B', 355, 258, 5, 1, 2, 11, 11, 16, 24], ['B', 330, 275, 10, 1, 1, 12, 10, 16, 24],
  ['C', 795, 5, -25, 2, 2, 12, 12, 15, 16], ['C', 870, 70, -25, 2, 4, 11, 10, 14, 16], ['C', 900, 165, -10, 3, 8, 10, 11, 13, 14], ['C', 860, 230, 0, 2, 3, 11, 9, 15, 13], ['C', 905, 280, -4, 3, 14, 11, 12, 14, 15], ['C', 880, 305, 5, 2, 4, 10, 9, 13, 15], ['C', 930, 490, -5, 4, 2, 10, 11, 14, 16],
  ['C', 815, 480, 10, 4, 1, 10, 8, 13, 14], ['C', 850, 565, 25, 3, 3, 9, 9, 12, 14], ['C', 720, 555, 30, 3, 2, 9, 9, 13, 15], ['C', 755, 605, 20, 2, 2, 9, 9, 12, 12], ['C', 965, 565, -20, 4, 5, 8, 8, 16, 17], ['C', 1030, 710, -30, 4, 5, 11, 10, 18, 18], ['C', 1085, 765, -35, 4, 4, 12, 9, 16, 14],
  ['C', 735, 495, 15, 2, 2, 9, 9, 13, 14], ['C', 1060, 240, -25, 2, 3, 24, 7, 30, 14], ['C', 1080, 295, -25, 2, 3, 24, 7, 30, 14], ['C', 845, 850, -35, 3, 1, 9, 9, 20, 14], ['C', 915, 795, -40, 4, 1, 9, 9, 14, 14], ['C', 325, 237, 30, 2, 1, 10, 9, 25, 14], ['C', 258, 285, 10, 1, 2, 13, 10, 25, 14], ['C', 150, 265, -20, 1, 2, 13, 10, 25, 32], ['C', 135, 1140, 5, 2, 3, 11, 11, 15, 18],
  ['C', 1085, 575, -10, 1, 3, 9, 13, 22, 14], ['C', 1125, 610, -30, 3, 1, 9, 8, 17, 20], ['C', 1112, 483, -25, 1, 1, 25, 8, 22, 20], ['C', 1155, 505, -10, 1, 2, 18, 9, 22, 14],
  ['D', 350, 515, -22, 2, 6, 38, 12, 44, 14], ['D', 435, 410, -22, 2, 6, 36, 12, 42, 14], ['D', 355, 5, -25, 1, 8, 38, 8, 42, 17], ['D', 445, 80, 22, 3, 1, 14, 12, 17, 14], ['D', 720, 0, 15, 6, 3, 16, 9, 20, 13], ['D', 560, 10, 15, 2, 5, 11, 13, 30, 15], ['D', 440, 0, 15, 3, 2, 15, 12, 18, 14], ['D', 630, 30, 15, 1, 1, 15, 12, 18, 14],
  ['D', 770, 560, 30, 1, 2, 10, 9, 18, 14], ['D', 315, 835, -35, 1, 1, 16, 12, 18, 14], ['D', 190, 852, -35, 2, 1, 8, 7, 13, 14], ['D', 0, 70, -30, 4, 1, 22, 22, 28, 14], ['D', 180, 10, -20, 4, 2, 20, 18, 28, 24], ['D', 40, 250, -10, 2, 2, 12, 9, 35, 40], ['D', 285, 655, 0, 1, 1, 17, 10, 1, 1], ['D', 15, 575, -40, 2, 1, 32, 6, 40, 1], ['D', 110, 605, 0, 1, 1, 13, 8, 1, 1],
  ['D', 0, 785, 30, 2, 5, 9, 9, 14, 17],
];
const trees: [number, number][] = [[882, 428], [922, 392], [955, 398], [1111, 402], [1097, 432], [1115, 455], [1145, 463], [1164, 485], [1127, 488], [1107, 595], [1045, 587], [976, 420], [955, 624], [938, 617], [907, 617], [945, 694], [970, 714], [1065, 385]];

const Houses = () => (
  <>
    {blocks.map(([s, x, y, a, c, r, w, h, sx, sy], b) => (
      <g key={b} transform={`${T(s)} translate(${x},${y}) rotate(${a})`}>
        {Array.from({ length: c * r }, (_, i) => {
          const k = (i * 37 + b * 13) % 11;
          return c * r > 12 && k === 4 ? null : <rect key={i} x={(i % c) * sx} y={Math.floor(i / c) * sy} width={w + 1 - (k % 3)} height={h + 1 - (k % 2)} />;
        })}
      </g>
    ))}
  </>
);
const Shield = ({ x, y }: { x: number; y: number }) => (
  <g><rect x={x - 13.500} y={y - 8.500} width="27" height="17" rx="2" fill="#f6d2cc" stroke="#d89f97" /><text x={x} y={y + 3.600} fontSize="10.500" textAnchor="middle" fontFamily="Noto Sans, sans-serif" fill="#6d2f26">117</text></g>
);
const CityMap = () => (
  <svg width="771" height="792" viewBox="534 231 771 792" strokeLinejoin="round">
    <path d="M534,935 545,950 555,965 545,970 540,980 548,988 534,990Z" fill="#eef0d5" />
    <path d={campus} fill="#ffffe5" stroke="#fff4b0" strokeWidth="1" />
    {grass.map(([s, p], i) => <polygon key={i} transform={T(s)} points={p} fill="#c8facc" />)}
    {wood.map(([s, p], i) => <polygon key={i} transform={T(s)} points={p} fill="#add19e" />)}
    <g transform={T('E')}><path d="M440,112 525,95 530,125 560,210 490,215 460,195Z" fill="#ffffe5" /><path d="M443,115 525,97 528,118 470,138 480,198 462,196Z" fill="#c8facc" /></g>
    <path d="M262,470 Q240,500 260,540 Q290,565 325,558 L280,490Z" transform={T('E')} fill="#c5d3a0" />
    <g fill="#ffffe5" transform={T('D')}><path d="M185,330 L180,260 Q190,205 265,198 Q340,205 350,290 Q378,350 365,395 Q300,490 110,515 L60,465 L115,415 L115,345Z" /></g>
    {ponds.map(([s, p], i) => <polygon key={i} transform={T(s)} points={p} fill="#aad3df" />)}
    {lakes.map((d, i) => <path key={i} d={d} transform={T('D')} fill="#aad3df" />)}
    {streams.map(([s, d, w], i) => <path key={i} d={d} transform={T(s)} fill="none" stroke="#aad3df" strokeWidth={w} strokeLinecap="round" />)}
    <g transform={T('E')} fill="#aae0cb" stroke="#7ccbae" strokeWidth="2"><path d="M560,85 690,50 715,185 590,215 575,150Z" fill="#ffffe5" stroke="none" /><path d="M595,78 660,60 695,188 632,207Z" /><path d="M610,106 660,95 676,160 625,172Z" /><path d="M585,125 605,120 612,175 592,170Z" fill="#c8facc" /></g>
    <path d="M1090,15 1165,15 1165,50 1120,75Z" transform={T('B')} fill="#aae0cb" stroke="#7ccbae" strokeWidth="2" />
    <g fill="#ececec" stroke="#d8d0d0" strokeWidth="2">{pale.map(([s, p], i) => <polygon key={i} transform={T(s)} points={p} />)}</g>
    <g fill="none" stroke="#86b377" strokeWidth=".7">
      {trees.map(([x, y], i) => <path key={i} d={`M${x - 2.500},${y + 4}v-4m-2.500-2a2.500,2.500 0 1 1 5,0a2.500,2.500 0 1 1-5,0M${x + 4},${y + 4}v-3m-2.200,0l2.200-6 2.200,6z`} />)}
    </g>
    <g fill="#d9d0c9" stroke="#c2b0a6" strokeWidth="2">
      {solids.map(([s, p], i) => <polygon key={i} transform={T(s)} points={p} />)}
      <g transform={T('E')}><circle cx="503" cy="163" r="22" /><rect x="520" y="150" width="20" height="26" /><circle cx="575" cy="820" r="17" /><path d="M350,552 370,542 383,570 360,582Z" fill="#ffffe5" /><path d="M718,650 755,645 765,690 735,698Z" fill="#dcdce8" /></g>
      <g transform={T('D')}><circle cx="72" cy="334" r="10" /><circle cx="93" cy="297" r="9" /></g>
      <Houses />
    </g>
    <path d="M385,522 Q430,505 438,540 Q440,570 408,565" transform={T('E')} fill="none" stroke="#d4c8c0" strokeWidth="16" />
    <g fill="none" stroke="#c9c6c2" strokeLinecap="round">{roads.map(([s, d, w], i) => <path key={i} d={d} transform={T(s)} strokeWidth={w > 5 ? w + 5 : w + 3.500} />)}</g>
    <g fill="none" strokeLinecap="round">{roads.map(([s, d, w], i) => <path key={i} d={d} transform={T(s)} strokeWidth={w} stroke={w < 5 ? '#f1efed' : '#fff'} />)}</g>
    <g transform={T('E')}><circle cx="443" cy="348" r="15" fill="#f6f6dc" stroke="#c9c6c2" strokeWidth="13" /><circle cx="443" cy="348" r="15" fill="none" stroke="#fff" strokeWidth="10" /></g>
    <g fill="none">
      <path d={trunk} transform={T('C')} stroke="#dc7560" strokeWidth="51" /><path d={trunk} transform={T('C')} stroke="#fcb09f" strokeWidth="46" />
      <path transform={T('A')} d="M383,1047 352,1110 M423,1072 395,1130" stroke="#333" strokeWidth="3.500" />
      <path transform={T('C')} d="M92,1022 90,1058 M140,1026 138,1060" stroke="#333" strokeWidth="3" />
      <g transform={T('B')}><path d="M535,305 575,292" stroke="#fff" strokeWidth="14" /><path d="M537,291 570,280 M540,301 574,289 M543,311 577,300 M793,851 822,834 M799,859 828,842" stroke="#333" strokeWidth="3" /></g>
      {tracks.map(([s, p], i) => <g key={i} transform={T(s)}><polyline points={p} stroke="#faf7f0" strokeWidth="6" /><polyline points={p} stroke="#af8437" strokeWidth="4" strokeDasharray="13 5 7 5" /></g>)}
      <path d={lakePath} transform={T('D')} stroke="#af8437" strokeWidth="4" strokeDasharray="13 5 7 5" />
      {footways.map(([s, p], i) => <polyline key={i} points={p} transform={T(s)} stroke="#f58d85" strokeWidth="3.500" strokeDasharray="5 4" />)}
    </g>
    <Shield x={828.500} y={262.700} /><Shield x={564.800} y={1010.500} />
    <circle cx="812" cy="496" r="7" fill="#bf0009" /><path d="M808,496h8M812,492v8" stroke="#fff" strokeWidth="1.800" />
    <circle cx="917.800" cy="626" r="7.400" fill="#6c72ee" stroke="#303a68" strokeWidth="1.400" /><circle cx="919.500" cy="627" r="4.600" fill="#a9a5f4" stroke="#1c8fe0" strokeWidth="1.300" />
    <defs>
      <path id="r1" d="M909,460 Q934,453 954,471" /><path id="r2" d="M823,528 L849,571" /><path id="r3" d="M1011,796 Q1040,788 1053,768" />
      <path id="r4" d="M972,375 Q969,392 980,413" /><path id="r5" d="M1071,231 L1083,274" /><path id="r6" d="M1247,547 L1312,567" />
    </defs>
    <g fontFamily="Noto Sans Thai, Noto Sans, sans-serif" fontSize="9" fill="#222" stroke="#fff" strokeWidth="2" paintOrder="stroke">
      <text textLength="46"><textPath href="#r1">ถนนเอกาทศรถ</textPath></text><text textLength="48"><textPath href="#r2">ถนนเอกาทศรถ</textPath></text>
      <text textLength="47"><textPath href="#r3">ถนนเอกาทศรถ</textPath></text><text textLength="38"><textPath href="#r4">ถนนธรรณทรวี</textPath></text>
      <text textLength="42"><textPath href="#r5">ายาพิษณุโลก</textPath></text><text textLength="66"><textPath href="#r6">ถนนออกมายพิษณุโลก</textPath></text>
    </g>
    <g fontFamily="Noto Sans Thai, Noto Sans, sans-serif" fill="#0092da" textAnchor="middle" stroke="#fff" strokeWidth="1" paintOrder="stroke">
      <text x="1069" y="710.500" fontSize="15.500" fontWeight="700">P</text><text x="1069" y="720" fontSize="9.500" textLength="33">ลานจอด</text><text x="1069" y="732" fontSize="9.500">รถ</text>
    </g>
  </svg>
);

const Tick = () => <Check><svg width="9" height="9" viewBox="0 0 9 9"><path d="M1.500 4.800 3.700 7 7.500 1.700" fill="none" stroke="#fff" strokeWidth="1.500" /></svg></Check>;
const FoldMark = () => <Fold><svg width="6" height="4" viewBox="0 0 6 4"><path d="M0 0h6L3 4z" fill="#bbb" /></svg></Fold>;
const Select = ({ w, children }: { w: number; children: React.ReactNode }) => <SelectBox $w={w}><span>{children}</span><Updown /></SelectBox>;

export default function App() {
  return (
    <>
      <Global />
      <Nav>
        <Brand>MapMint Live Instance</Brand>
        <NavItem $active>WSXPOINTS</NavItem><NavItem>Points</NavItem><NavItem>Lines</NavItem><NavItem>Polygons</NavItem><NavItem>Extents</NavItem>
        <NavRight><HomeIcon /><UserIcon /></NavRight>
      </Nav>
      <Page>
        <Title>WSXPOINTS</Title>
        <Subtitle>WSXPOINTS</Subtitle>
        <Tabs>
          <Tab><TabIcon><TableIcon /></TabIcon>Table</Tab>
          <Tab><TabIcon><FaRegEdit size={14} /></TabIcon>Edit</Tab>
          <Tab><TabIcon><PlusIcon /></TabIcon>Add</Tab>
          <Tab $active><TabIcon><MapIcon /></TabIcon>Map</Tab>
        </Tabs>
        <Columns>
          <MapPanel>
            <PanelHead><PanelTitle>Map used in edition form</PanelTitle><HeadIcons><HomeIcon /><StarIcon /></HeadIcons></PanelHead>
            <PanelBody>
              <Side>
                <ToolRow>
                  <Tool $active><LayersIcon /></Tool><Tool><CopyrightIcon /></Tool><Tool><InfoIcon /></Tool><Tool><TableIcon s={13} /></Tool>
                  <Collapse><svg width="6" height="10" viewBox="0 0 6 10"><path d="M5 .5.800 5 5 9.500" fill="none" stroke="#ddd" /></svg></Collapse>
                </ToolRow>
                <SubTabs><SubTab $w={131}><LayersIcon tone={1} />Base Layers</SubTab><SubTab $w={101} $active><LayersIcon tone={2} />Legend</SubTab></SubTabs>
                <Tree>
                  <TreeRow $x={29} $h={30}><Tick /><FoldMark />Legend</TreeRow>
                  <TreeRow $x={34} $h={30}><Tick /><FoldMark />Group</TreeRow>
                  <TreeRow $x={39} $h={32} $leaf><Tick /><LeafName>sample.wsxpoints</LeafName><Drop><svg width="8" height="4" viewBox="0 0 8 4"><path d="M0 0h8L4 4z" fill="#888" /></svg></Drop></TreeRow>
                </Tree>
                <Foot>© Copyright <Green>GeoLabs</Green> | Powered by <MintLink><MintIcon />MapMint</MintLink></Foot>
              </Side>
              <MapView>
                <CityMap />
                <Ctl $c="zoom">
                  <CtlBtn><svg width="10" height="10"><path d="M0 5h10M5 0v10" stroke="#666" strokeWidth="1.500" /></svg></CtlBtn>
                  <CtlBtn><svg width="10" height="10"><path d="M0 5h10" stroke="#666" strokeWidth="1.500" /></svg></CtlBtn>
                </Ctl>
                <Ctl $c="info"><CtlBtn><svg width="4" height="12"><path d="M.5 0h3v2.500h-3zM.5 4h3v8h-3z" fill="#666" /></svg></CtlBtn></Ctl>
              </MapView>
            </PanelBody>
          </MapPanel>
          <Form>
            <Label>Layer</Label><Select w={323}>None</Select>
            <Label>Title</Label><Input />
            <Tabs><Tab $active>Filter</Tab><Tab>Processing</Tab><Tab>Report</Tab></Tabs>
            <Pane>
              <Help>Create a new layer by applying filters to the<br />available features</Help>
              <Help>First choose a layer, then choose one or more<br />field and define for every column the operator<br />and value to check for filtering features.</Help>
              <Help>Optionaly, you can also add filter to existing<br />one by pressing the <PlusIcon /> button.</Help>
              <Button $w={57} $h={34}>Filter</Button>
              <FieldRow $gap={30}><div><Label>Column</Label><Select w={185}>First select a layer</Select></div><div><Label>Operator</Label><Select w={78}>=</Select></div></FieldRow>
              <FieldRow $gap={29}><div><Label>Value</Label><Select w={212}>First select a field</Select></div><AddField><Label>Add</Label><Button $w={32} $h={30}><PlusIcon s={10} /></Button></AddField></FieldRow>
            </Pane>
          </Form>
        </Columns>
      </Page>
    </>
  );
}
